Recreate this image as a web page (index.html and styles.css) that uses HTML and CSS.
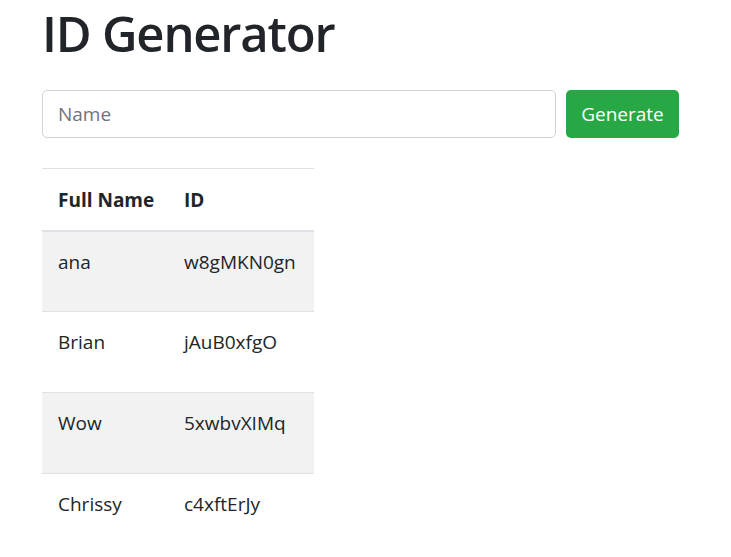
FILE: index.html
```html
<!DOCTYPE html>
<html lang="en">
<head>
<meta charset="utf-8">
<title>ID Generator</title>
<link rel="stylesheet" href="styles.css">
</head>
<body>
<div class="container">
  <h1 class="title">ID Generator</h1>
  <form class="gen-form">
    <input class="name-input" type="text" placeholder="Name">
    <button class="btn-generate" type="button">Generate</button>
  </form>
  <table class="id-table">
    <colgroup><col class="col-name"><col class="col-id"></colgroup>
    <thead>
      <tr><th>Full Name</th><th>ID</th></tr>
    </thead>
    <tbody>
      <tr class="odd"><td>ana</td><td>w8gMKN0gn</td></tr>
      <tr><td>Brian</td><td>jAuB0xfgO</td></tr>
      <tr class="odd"><td>Wow</td><td>5xwbvXIMq</td></tr>
      <tr class="last"><td>Chrissy</td><td>c4xftErJy</td></tr>
    </tbody>
  </table>
</div>
</body>
</html>
```

FILE: styles.css
```css
* { box-sizing: border-box; }
html, body {
  margin: 0;
  padding: 0;
  background: #fff;
}
body {
  font-family: "Open Sans", "Noto Sans", sans-serif;
  font-size: 20px;
  color: #212529;
}
.container {
  padding: 0 0 0 42px;
}
.title {
  margin: 0;
  padding-top: 3px;
  font-size: 49px;
  font-weight: 600;
  line-height: 60px;
  letter-spacing: -1.2px;
}
.gen-form {
  display: flex;
  gap: 10px;
  margin-top: 27px;
  width: 637px;
}
.name-input {
  flex: 1;
  height: 48px;
  border: 1px solid #ced4da;
  border-radius: 5px;
  padding: 0 15px;
  font-family: inherit;
  font-size: 19px;
  color: #495057;
}
.name-input::placeholder { color: #6c757d; }
.btn-generate {
  width: 113px;
  height: 48px;
  border: none;
  border-radius: 5px;
  background: #28a745;
  color: #fff;
  font-family: inherit;
  font-size: 19px;
  padding: 0;
}
.id-table {
  margin-top: 30px;
  border-collapse: collapse;
  table-layout: fixed;
  width: 272px;
}
.col-name { width: 126px; }
.col-id { width: 146px; }
.id-table th, .id-table td {
  text-align: left;
  padding: 0 0 0 16px;
  white-space: nowrap;
  font-size: 19px;
  line-height: 30px;
}
.id-table th {
  height: 62px;
  padding-top: 2px;
  font-weight: 700;
  border-top: 1px solid #dee2e6;
  border-bottom: 2px solid #dee2e6;
}
.id-table td {
  height: 81px;
  vertical-align: top;
  padding-top: 15px;
  border-bottom: 1px solid #dee2e6;
}
.id-table tr.odd td { background: #f2f2f2; }
.id-table tr.last td { border-bottom: none; }
```
